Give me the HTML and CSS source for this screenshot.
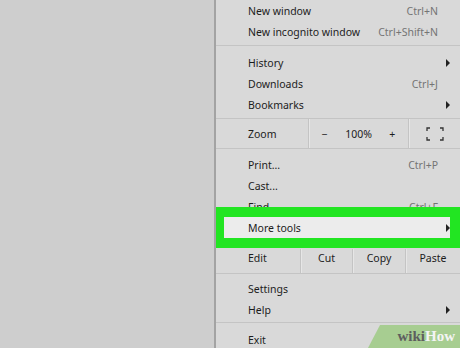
FILE: index.html
```html
<!DOCTYPE html>
<html lang="en">
<head>
  <meta charset="UTF-8">
  <title>Chrome menu - More tools</title>
  <link rel="stylesheet" href="styles.css">
</head>
<body>
  <div class="backdrop"></div>
  <div class="menu">
    <div class="section first">
      <div class="item"><span>New window</span><span class="key">Ctrl+N</span></div>
      <div class="item"><span>New incognito window</span><span class="key">Ctrl+Shift+N</span></div>
    </div>
    <div class="section">
      <div class="item"><span>History</span><span class="arrow"></span></div>
      <div class="item"><span>Downloads</span><span class="key">Ctrl+J</span></div>
      <div class="item"><span>Bookmarks</span><span class="arrow"></span></div>
    </div>
    <div class="cells zoom">
      <div class="cell label">Zoom</div>
      <div class="cell zoom-ctrl">
        <span>&minus;</span><span>100%</span><span>+</span>
      </div>
      <div class="cell full">
        <svg width="18" height="14" viewBox="0 0 18 14">
          <path d="M1 4V1h3M14 1h3v3M17 10v3h-3M4 13H1v-3" fill="none" stroke="#333" stroke-width="1.3"/>
        </svg>
      </div>
    </div>
    <div class="section after-cells tools">
      <div class="item"><span>Print...</span><span class="key">Ctrl+P</span></div>
      <div class="item"><span>Cast...</span></div>
      <div class="item"><span>Find...</span><span class="key">Ctrl+F</span></div>
      <div class="item active"><span>More tools</span><span class="arrow"></span></div>
    </div>
    <div class="cells edit">
      <div class="cell label">Edit</div>
      <div class="cell">Cut</div>
      <div class="cell">Copy</div>
      <div class="cell">Paste</div>
    </div>
    <div class="section after-cells settings">
      <div class="item"><span>Settings</span></div>
      <div class="item"><span>Help</span><span class="arrow"></span></div>
    </div>
    <div class="section last">
      <div class="item"><span>Exit</span></div>
    </div>
    <div class="watermark"><b>wiki</b><em>How</em></div>
  </div>
</body>
</html>
```

FILE: styles.css
```css
body {
  margin: 0;
  height: 348px;
  overflow: hidden;
  display: flex;
  background: #cecece;
  font-family: "Noto Sans", "Open Sans", sans-serif;
  font-size: 10.5px;
  color: #1c1c1c;
}
.backdrop { flex: 1; }
.menu {
  width: 244px;
  border-left: 2px solid #a3a3a3;
  background: #d9d9d9;
  position: relative;
  overflow: hidden;
}
.section {
  padding: 6px 0 3px;
  border-top: 1px solid #c4c4c4;
}
.section.first {
  padding-top: 0;
  border-top: none;
}
.section.after-cells { border-top: none; }
.section.tools { padding: 5px 0 10px; }
.section.settings { padding: 4px 0 2px; }
.section.last { padding-top: 6px; }
.item {
  height: 21px;
  display: flex;
  align-items: center;
  justify-content: space-between;
  padding: 0 22px 0 32px;
  position: relative;
}
.key { color: #747474; }
.arrow {
  width: 0;
  height: 0;
  margin-right: -12px;
  border-top: 4px solid transparent;
  border-bottom: 4px solid transparent;
  border-left: 4px solid #222;
}
.item.active { background: #ececec; }
.item.active::after {
  content: "";
  position: absolute;
  top: -10px;
  bottom: -10px;
  left: -2px;
  right: 0;
  border: 10px solid #22e522;
}
.cells {
  display: flex;
  border-top: 1px solid #c4c4c4;
  border-bottom: 1px solid #c4c4c4;
}
.cell {
  display: flex;
  align-items: center;
  justify-content: center;
  border-left: 1px solid #c4c4c4;
  box-shadow: inset 1px 0 0 #e6e6e6;
}
.cell.label {
  justify-content: flex-start;
  padding-left: 32px;
  border-left: none;
  box-shadow: none;
}
.zoom { height: 29px; }
.zoom .label { width: 60px; }
.zoom-ctrl {
  width: 100px;
  justify-content: space-around;
  padding: 0 4px;
  box-sizing: border-box;
}
.zoom .full { flex: 1; }
.edit { height: 24px; border-top-color: transparent; }
.edit .cell { padding-bottom: 7px; }
.edit .label { width: 52px; }
.edit .cell:nth-child(2) { width: 51px; }
.edit .cell:nth-child(3) { width: 52px; }
.edit .cell:nth-child(4) { flex: 1; }
.watermark {
  position: absolute;
  right: 0;
  bottom: 0;
  width: 92px;
  height: 23px;
  background: rgba(150, 200, 120, 0.75);
  clip-path: polygon(12px 0, 100% 0, 100% 100%, 0 100%);
  display: flex;
  align-items: center;
  justify-content: flex-end;
  padding-right: 5px;
  box-sizing: border-box;
  font-family: "Liberation Serif", serif;
  font-size: 15px;
  font-weight: bold;
}
.watermark b { color: #5e5e5e; }
.watermark em { color: #f4f4f4; font-style: normal; }
```
